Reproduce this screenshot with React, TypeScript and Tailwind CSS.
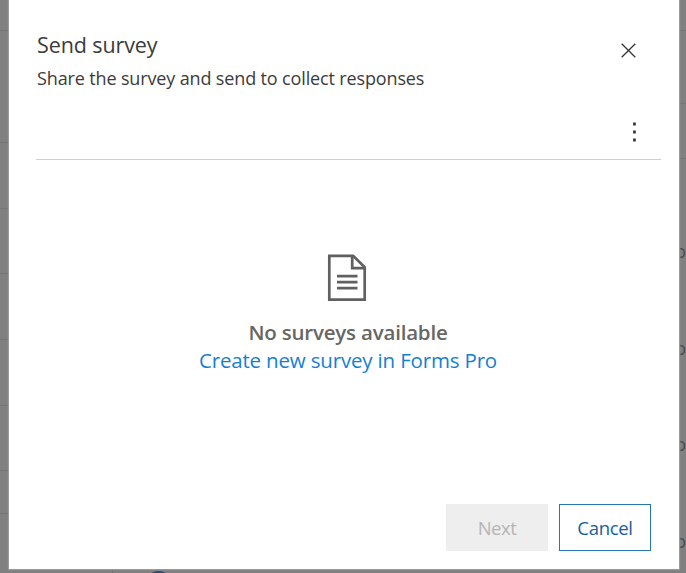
const leftRows = ['h-[31px]', 'h-[112px]', 'h-[66px]', 'h-[65px]', 'h-[66px]', 'h-[66px]', 'h-[65px]', 'h-[43px]'];
const rightRows = ['h-[31px]', 'h-[73px]', 'h-[55px]'];

function Backdrop() {
  return (
    <div className="flex h-[573px] w-full flex-col bg-[#808080]" aria-hidden="true">
      <div className="flex h-[569px] justify-between">
        <div className="w-2">
          {leftRows.map((height, i) => (
            <div key={i} className={`${height} border-b border-[#747474]`} />
          ))}
        </div>
        <div className="w-[7px] overflow-hidden">
          {rightRows.map((height, i) => (
            <div key={i} className={`${height} border-b border-[#747474]`} />
          ))}
          <div className="flex flex-col gap-[76.5px] pt-[82px] text-[18.5px] leading-5 text-[#4c4c4c]">
            {[0, 1, 2, 3].map((i) => (
              <span key={i} className="-ml-[4px]">o</span>
            ))}
          </div>
        </div>
      </div>
      <div className="flex h-1 overflow-hidden">
        <div className="w-[113px] border-r border-[#707070]" />
        <div className="mt-[2px] ml-[32px] size-[27px] shrink-0 rounded-full bg-[#294b66]" />
      </div>
    </div>
  );
}

function DocumentIcon() {
  return (
    <svg width="40" height="48" viewBox="0 0 40 48" fill="none" stroke="#606060" strokeWidth="2.7" className="mr-[2px] block">
      <path d="M2.3 1.8H26.2L37.7 13.3V45.7H2.3Z" />
      <path d="M25.2 2V14.2H37.5" />
      <path d="M10 22.2H30.5M10 28.2H30.5M10 34.2H30.5" />
    </svg>
  );
}

export default function App() {
  return (
    <div className="relative h-[573px] w-full overflow-hidden font-['Open_Sans','Noto_Sans',sans-serif]">
      <Backdrop />
      <div
        role="dialog"
        aria-label="Send survey"
        className="absolute top-0 left-[8.5px] flex h-[569px] w-[670px] flex-col bg-white pr-[18px] pl-[27px] shadow-[0_0_1px_1px_#9a9a9a]"
      >
        <header className="flex h-[160px] justify-between border-b border-[#cfcfcf]">
          <div className="pt-[31px] pl-[1.5px] whitespace-nowrap text-[#3b3b3b]">
            <h1 className="text-[21.5px] leading-7 tracking-[-0.1px]">Send survey</h1>
            <p className="mt-[7px] text-[18px] leading-6 tracking-[-0.14px]">Share the survey and send to collect responses</p>
          </div>
          <div className="flex flex-col items-end pt-[43px] pr-[24.5px]">
            <button aria-label="Close" className="block">
              <svg width="15" height="15" viewBox="0 0 15 15" fill="none" stroke="#333" strokeWidth="1.3" className="block">
                <path d="M.7.7 14.3 14.3M14.3.7.7 14.3" />
              </svg>
            </button>
            <button aria-label="More options" className="mt-[64px] mr-[0.5px] block">
              <svg width="3" height="20" viewBox="0 0 3 20" fill="#333" className="block">
                <path d="M.1.6h2.7v2.8H.1zM.1 8.6h2.7v2.8H.1zM.1 16.6h2.7v2.8H.1z" />
              </svg>
            </button>
          </div>
        </header>
        <main className="flex grow flex-col items-center pt-[94px] whitespace-nowrap">
          <DocumentIcon />
          <p className="mt-4 text-[20.5px] leading-7 font-semibold tracking-[-0.2px] text-[#666]">No surveys available</p>
          <a href="#" className="text-[20.5px] leading-7 tracking-[-0.17px] text-[#157fd2]">Create new survey in Forms Pro</a>
        </main>
        <footer className="mb-[18px] flex h-[47px] justify-end gap-[11px] pr-[9.5px] text-[18.5px]">
          <button disabled className="w-[102px] bg-[#eee] tracking-[-0.5px] text-[#b5b5b5]">Next</button>
          <button className="w-[92px] border-[1.5px] border-[#2875b4] tracking-[-0.3px] text-[#17609f]">Cancel</button>
        </footer>
      </div>
    </div>
  );
}
